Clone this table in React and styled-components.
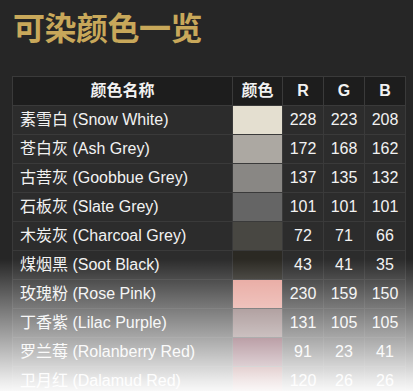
import React from "react";
import styled, { createGlobalStyle } from "styled-components";

const GlobalStyle = createGlobalStyle`
  html, body {
    margin: 0;
    padding: 0;
    background: #262626;
  }
  body {
    font-family: "Liberation Sans", "Noto Sans CJK SC", Arial, sans-serif;
    overflow: hidden;
  }
`;

const colors = [
  { name: "素雪白 (Snow White)", rgb: [228, 223, 208] },
  { name: "苍白灰 (Ash Grey)", rgb: [172, 168, 162] },
  { name: "古菩灰 (Goobbue Grey)", rgb: [137, 135, 132] },
  { name: "石板灰 (Slate Grey)", rgb: [101, 101, 101] },
  { name: "木炭灰 (Charcoal Grey)", rgb: [72, 71, 66] },
  { name: "煤烟黑 (Soot Black)", rgb: [43, 41, 35] },
  { name: "玫瑰粉 (Rose Pink)", rgb: [230, 159, 150] },
  { name: "丁香紫 (Lilac Purple)", rgb: [131, 105, 105] },
  { name: "罗兰莓 (Rolanberry Red)", rgb: [91, 23, 41] },
  { name: "卫月红 (Dalamud Red)", rgb: [120, 26, 26] },
];

const Page = styled.div`
  position: relative;
  width: 413px;
  height: 391px;
  padding: 0 8px 0 12px;
  box-sizing: border-box;
  overflow: hidden;
`;

const Title = styled.h1`
  margin: 0;
  padding: 6px 0 0 1px;
  height: 76px;
  box-sizing: border-box;
  font-family: "Noto Sans CJK SC", sans-serif;
  font-size: 32px;
  line-height: 40px;
  font-weight: 700;
  color: #c8a85a;
  letter-spacing: -0.5px;
`;

const Table = styled.table`
  border-collapse: collapse;
  width: 393px;
  table-layout: fixed;
  color: #f2f2f2;
  font-size: 16px;
  line-height: 18px;
`;

const HeadRow = styled.tr`
  height: 29px;
  background: #1d1d1d;
`;

const HeadCell = styled.th`
  padding: 0;
  border: 1px solid #3a3a3a;
  font-weight: 700;
  text-align: center;
`;

const Row = styled.tr`
  height: 29px;
  background: #2c2c2c;
`;

const NameCell = styled.td`
  padding: 0 0 0 7px;
  border: 1px solid #3a3a3a;
  white-space: nowrap;
`;

const Swatch = styled.td`
  border: 1px solid #3a3a3a;
  padding: 0;
`;

const NumCell = styled.td`
  border: 1px solid #3a3a3a;
  padding: 0;
  text-align: center;
`;

const Fade = styled.div`
  position: absolute;
  left: 0;
  right: 0;
  bottom: 0;
  height: 132px;
  pointer-events: none;
  background: linear-gradient(
    to bottom,
    rgba(255, 255, 255, 0) 0%,
    rgba(255, 255, 255, 0.3) 30%,
    rgba(255, 255, 255, 0.6) 61%,
    rgba(255, 255, 255, 0.9) 92%,
    rgba(255, 255, 255, 0.97) 100%
  );
`;

const widths = [220, 50, 41, 41, 41];

export default function App() {
  return (
    <>
      <GlobalStyle />
      <Page>
        <Title>可染颜色一览</Title>
        <Table>
          <colgroup>
            {widths.map((w, i) => (
              <col key={i} style={{ width: w }} />
            ))}
          </colgroup>
          <thead>
            <HeadRow>
              <HeadCell>颜色名称</HeadCell>
              <HeadCell>颜色</HeadCell>
              <HeadCell>R</HeadCell>
              <HeadCell>G</HeadCell>
              <HeadCell>B</HeadCell>
            </HeadRow>
          </thead>
          <tbody>
            {colors.map((c) => (
              <Row key={c.name}>
                <NameCell>{c.name}</NameCell>
                <Swatch style={{ background: `rgb(${c.rgb.join(",")})` }} />
                {c.rgb.map((v, i) => (
                  <NumCell key={i}>{v}</NumCell>
                ))}
              </Row>
            ))}
          </tbody>
        </Table>
        <Fade />
      </Page>
    </>
  );
}
